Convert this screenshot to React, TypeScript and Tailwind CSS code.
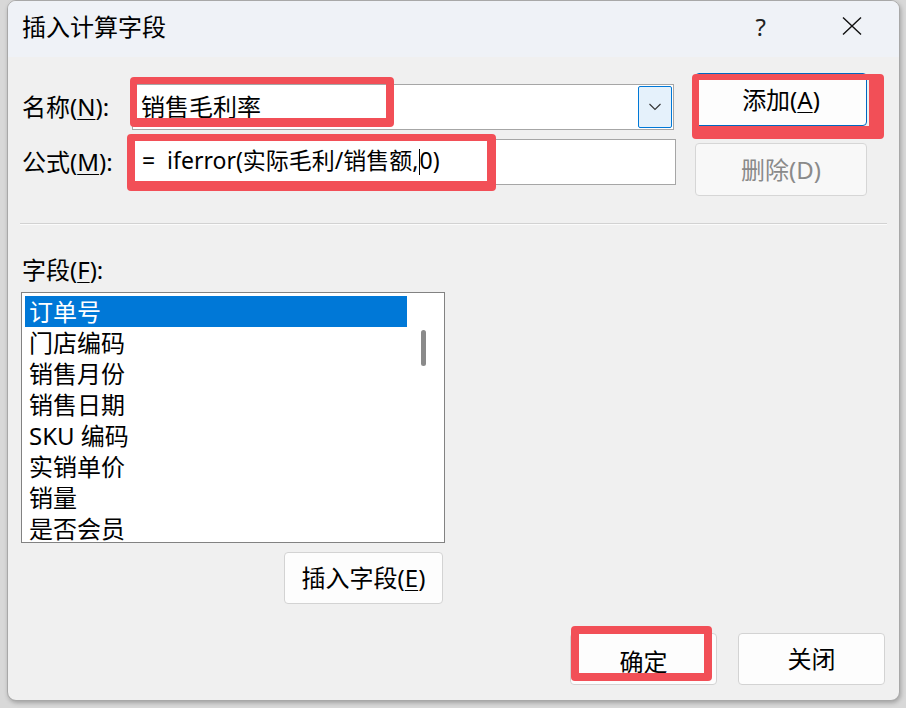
import React from "react";

const fields = ["订单号", "门店编码", "销售月份", "销售日期", "SKU 编码", "实销单价", "销量", "是否会员"];

function U({ c }: { c: string }) {
  return <span className="underline decoration-1 underline-offset-[3px]">{c}</span>;
}

export default function App() {
  return (
    <div className="relative w-[906px] h-[708px] overflow-hidden bg-[#d8d8d8] font-['Noto_Sans','Noto_Sans_CJK_SC',sans-serif] text-[24px] text-black">
      <div className="ml-[7px] w-[893px] h-[701px] rounded-[9px] border border-[#a8a8a8] bg-[#f0f0f0] overflow-hidden flex flex-col shadow-[1px_2px_4px_rgba(0,0,0,0.25)]">
        {/* title bar */}
        <div className="h-[56px] bg-[#eff2f7] flex items-center pl-[14px] shrink-0">
          <span className="leading-none -mt-[4px]">插入计算字段</span>
          <span className="ml-auto mr-[76px] leading-none -mt-[4px] text-[24px] text-[#222]">?</span>
          <svg width="20" height="18" viewBox="0 0 20 18" className="mr-[37px] -mt-[6px]">
            <path d="M1 0.5 L19 17.5 M19 0.5 L1 17.5" stroke="#111" strokeWidth="1.4" fill="none" />
          </svg>
        </div>
        {/* body */}
        <div className="flex flex-col pl-[14px] pt-[16px]">
          <div className="flex">
            <div className="w-[654px] flex flex-col pt-[11px] gap-[9px]">
              <div className="flex items-center h-[46px]">
                <div className="w-[110px] leading-none">
                  名称(<U c="N" />):
                </div>
                <div className="w-[542px] h-[46px] bg-white border border-[#a6a6a6] flex items-center">
                  <span className="pl-[8px] leading-none flex-1">销售毛利率</span>
                  <div className="w-[34px] h-[42px] mr-[1px] bg-[#e5f1fb] border border-[#0078d7] rounded-[2px] flex items-center justify-center">
                    <svg width="14" height="8" viewBox="0 0 14 8">
                      <path d="M1.5 1 L7 6.5 L12.5 1" stroke="#333" strokeWidth="1.1" fill="none" />
                    </svg>
                  </div>
                </div>
              </div>
              <div className="flex items-center h-[46px]">
                <div className="w-[110px] leading-none">
                  公式(<U c="M" />):
                </div>
                <div className="w-[544px] h-[46px] bg-white border border-[#a6a6a6] flex items-center">
                  <span className="pl-[9px] leading-none whitespace-pre text-[23px]">
                    =  iferror(实际毛利/销售额,<span className="inline-block w-[1px] h-[26px] bg-black align-middle -mt-[3px]"></span>0)
                  </span>
                </div>
              </div>
            </div>
            <div className="ml-[19px] w-[172px] flex flex-col">
              <div className="h-[53px] bg-[#fdfdfd] border border-[#0067c0] rounded-[4px] flex items-center justify-center leading-none">
                添加(<U c="A" />)
              </div>
              <div className="mt-[17px] h-[53px] bg-[#f8f8f8] border border-[#d6d6d6] rounded-[4px] flex items-center justify-center leading-none text-[#8a8a8a]">
                删除(D)
              </div>
            </div>
          </div>
          {/* separator */}
          <div className="mt-[27px] -ml-[2px] w-[867px] h-[2px] border-t border-[#d2d2d2] border-b border-b-[#fbfbfb]"></div>
          <div className="mt-[30px] h-[30px] flex items-center leading-none">
            字段(<U c="F" />):
          </div>
          <div className="mt-[7px] -ml-[1px] w-[424px] h-[251px] bg-white border border-[#828282] flex overflow-hidden">
            <div className="pt-[3px] pl-[3px] w-[385px] flex flex-col">
              {fields.map((f, i) => (
                <div
                  key={f}
                  className={
                    "h-[31px] shrink-0 flex items-center pl-[4px] leading-none " +
                    (i === 0 ? "bg-[#0078d7] text-white" : "")
                  }
                >
                  {f}
                </div>
              ))}
            </div>
            <div className="flex-1 relative">
              <div className="absolute left-[14px] top-[37px] w-[5px] h-[36px] rounded-full bg-[#8a8a8a]"></div>
            </div>
          </div>
          <div className="mt-[9px] ml-[262px] w-[159px] h-[52px] bg-[#fdfdfd] border border-[#d3d3d3] rounded-[4px] flex items-center justify-center leading-none">
            插入字段(<U c="E" />)
          </div>
          <div className="mt-[29px] ml-[548px] flex gap-[21px]">
            <div className="w-[147px] h-[52px] bg-[#fdfdfd] border border-[#d3d3d3] rounded-[4px] flex items-center justify-center leading-none pt-[6px]">
              确定
            </div>
            <div className="w-[147px] h-[52px] bg-[#fdfdfd] border border-[#d3d3d3] rounded-[4px] flex items-center justify-center leading-none">
              关闭
            </div>
          </div>
        </div>
      </div>
      {/* red highlight boxes */}
      <div className="absolute left-[130px] top-[77px] w-[264px] h-[50px] border-[#f24f57] border-t-[7px] border-l-[7px] border-r-[8px] border-b-[9px] rounded-[4px]"></div>
      <div className="absolute left-[127px] top-[134px] w-[369px] h-[57px] border-[#f24f57] border-t-[7px] border-l-[8px] border-r-[9px] border-b-[10px] rounded-[4px]"></div>
      <div className="absolute left-[692px] top-[74px] w-[192px] h-[65px] border-[#f24f57] border-t-[6px] border-l-[7px] border-r-[15px] border-b-[13px] rounded-[4px]"></div>
      <div className="absolute left-[571px] top-[626px] w-[141px] h-[55px] border-[#f24f57] border-[8px] rounded-[4px]"></div>
    </div>
  );
}
